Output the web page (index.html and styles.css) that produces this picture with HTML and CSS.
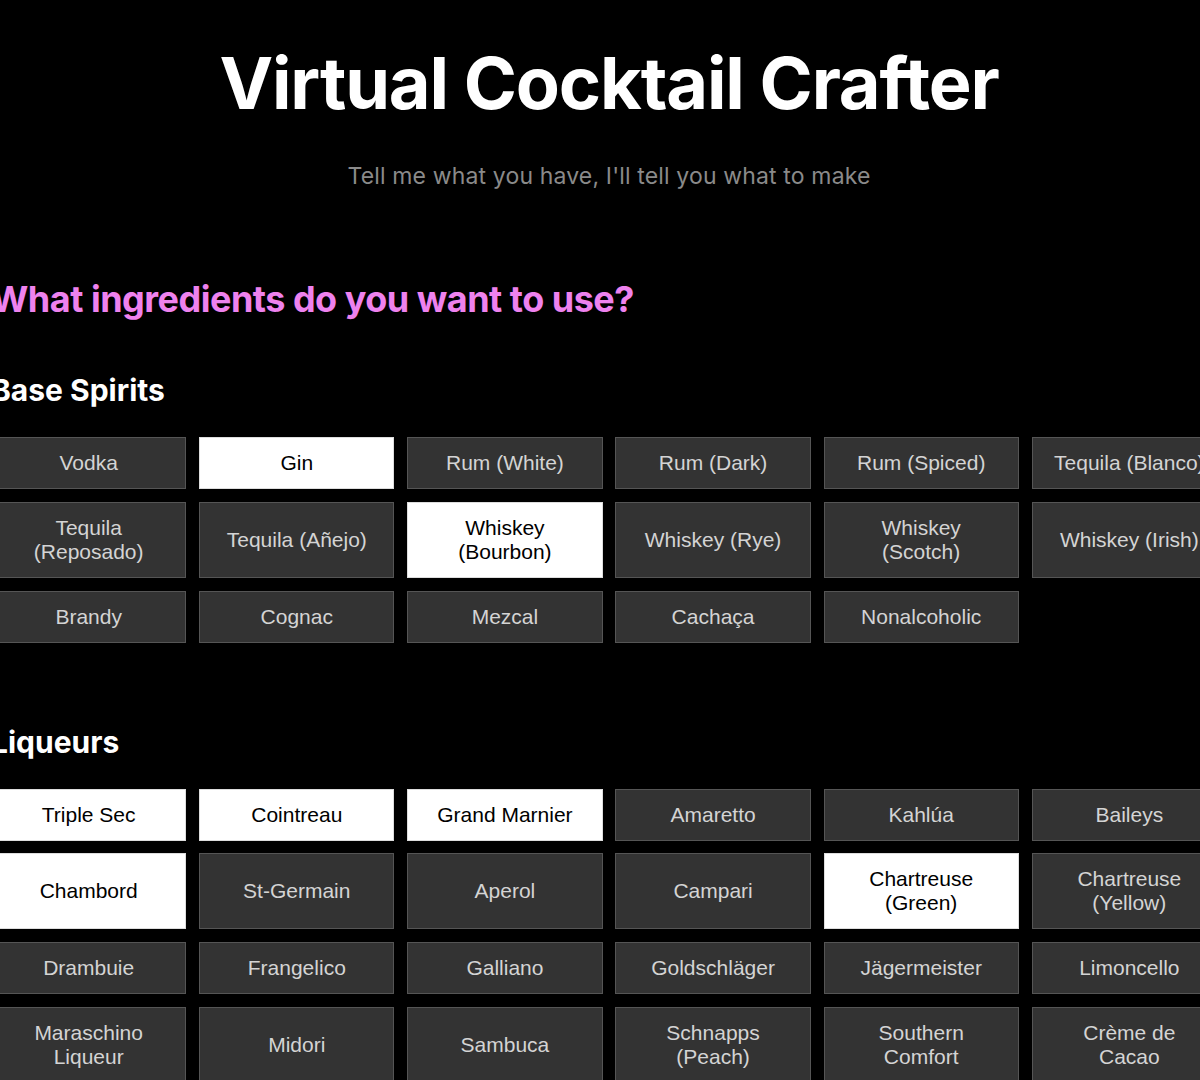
FILE: index.html
```html
<!DOCTYPE html>
<html lang="en">
<head>
<meta charset="utf-8">
<title>Virtual Cocktail Crafter</title>
<link rel="stylesheet" href="styles.css">
</head>
<body>
<main class="page">
  <header class="hero">
    <h1 class="title">Virtual Cocktail Crafter</h1>
    <p class="subtitle">Tell me what you have, I'll tell you what to make</p>
  </header>

  <section class="ingredients">
    <h2 class="question">What ingredients do you want to use?</h2>

    <div class="group">
      <h3 class="group-title">Base Spirits</h3>
      <div class="grid">
        <button class="chip">Vodka</button>
        <button class="chip selected">Gin</button>
        <button class="chip">Rum (White)</button>
        <button class="chip">Rum (Dark)</button>
        <button class="chip">Rum (Spiced)</button>
        <button class="chip">Tequila (Blanco)</button>
        <button class="chip">Tequila (Reposado)</button>
        <button class="chip">Tequila (Añejo)</button>
        <button class="chip selected">Whiskey (Bourbon)</button>
        <button class="chip">Whiskey (Rye)</button>
        <button class="chip">Whiskey (Scotch)</button>
        <button class="chip">Whiskey (Irish)</button>
        <button class="chip">Brandy</button>
        <button class="chip">Cognac</button>
        <button class="chip">Mezcal</button>
        <button class="chip">Cachaça</button>
        <button class="chip">Nonalcoholic</button>
      </div>
    </div>

    <div class="group">
      <h3 class="group-title">Liqueurs</h3>
      <div class="grid">
        <button class="chip selected">Triple Sec</button>
        <button class="chip selected">Cointreau</button>
        <button class="chip selected">Grand Marnier</button>
        <button class="chip">Amaretto</button>
        <button class="chip">Kahlúa</button>
        <button class="chip">Baileys</button>
        <button class="chip selected">Chambord</button>
        <button class="chip">St-Germain</button>
        <button class="chip">Aperol</button>
        <button class="chip">Campari</button>
        <button class="chip selected">Chartreuse (Green)</button>
        <button class="chip">Chartreuse (Yellow)</button>
        <button class="chip">Drambuie</button>
        <button class="chip">Frangelico</button>
        <button class="chip">Galliano</button>
        <button class="chip">Goldschläger</button>
        <button class="chip">Jägermeister</button>
        <button class="chip">Limoncello</button>
        <button class="chip">Maraschino Liqueur</button>
        <button class="chip">Midori</button>
        <button class="chip">Sambuca</button>
        <button class="chip">Schnapps (Peach)</button>
        <button class="chip">Southern Comfort</button>
        <button class="chip">Crème de Cacao</button>
        <button class="chip">Crème de Menthe</button>
        <button class="chip">Blue Curaçao</button>
      </div>
    </div>
  </section>
</main>
</body>
</html>
```

FILE: styles.css
```css
html, body {
  margin: 0;
  padding: 0;
  background: #000;
  overflow-x: hidden;
}

body {
  font-family: "Inter", "Liberation Sans", Arial, sans-serif;
  color: #fff;
}

.page {
  width: 1236px;
  margin-left: -9px;
}

.hero {
  text-align: center;
  padding-top: 39px;
}

.title {
  margin: 0;
  font-size: 72px;
  font-weight: 700;
  line-height: 88px;
  letter-spacing: -1.15px;
}

.subtitle {
  margin: 34px 0 0;
  font-size: 23px;
  line-height: 30px;
  letter-spacing: 0.15px;
  color: #8a8a8a;
}

.ingredients {
  margin-top: 86px;
}

.question {
  margin: 0;
  font-size: 36px;
  font-weight: 700;
  line-height: 44px;
  letter-spacing: -0.5px;
  color: #ee82ee;
}

.group {
  margin-top: 51px;
}

.group + .group {
  margin-top: 81px;
}

.group-title {
  margin: 0 0 29px;
  font-size: 30px;
  font-weight: 700;
  line-height: 36px;
  color: #fff;
}

.grid {
  display: grid;
  grid-template-columns: repeat(6, 1fr);
  gap: 12.8px;
}

.chip {
  display: flex;
  align-items: center;
  justify-content: center;
  box-sizing: border-box;
  padding: 13px 18px;
  margin: 0;
  font-family: "Liberation Sans", Arial, sans-serif;
  font-size: 21px;
  line-height: 24px;
  color: #d4d4d4;
  background: #333;
  border: 1px solid #555;
  border-radius: 0;
  text-align: center;
}

.chip.selected {
  background: #fff;
  color: #000;
  border-color: #ddd;
}
```
